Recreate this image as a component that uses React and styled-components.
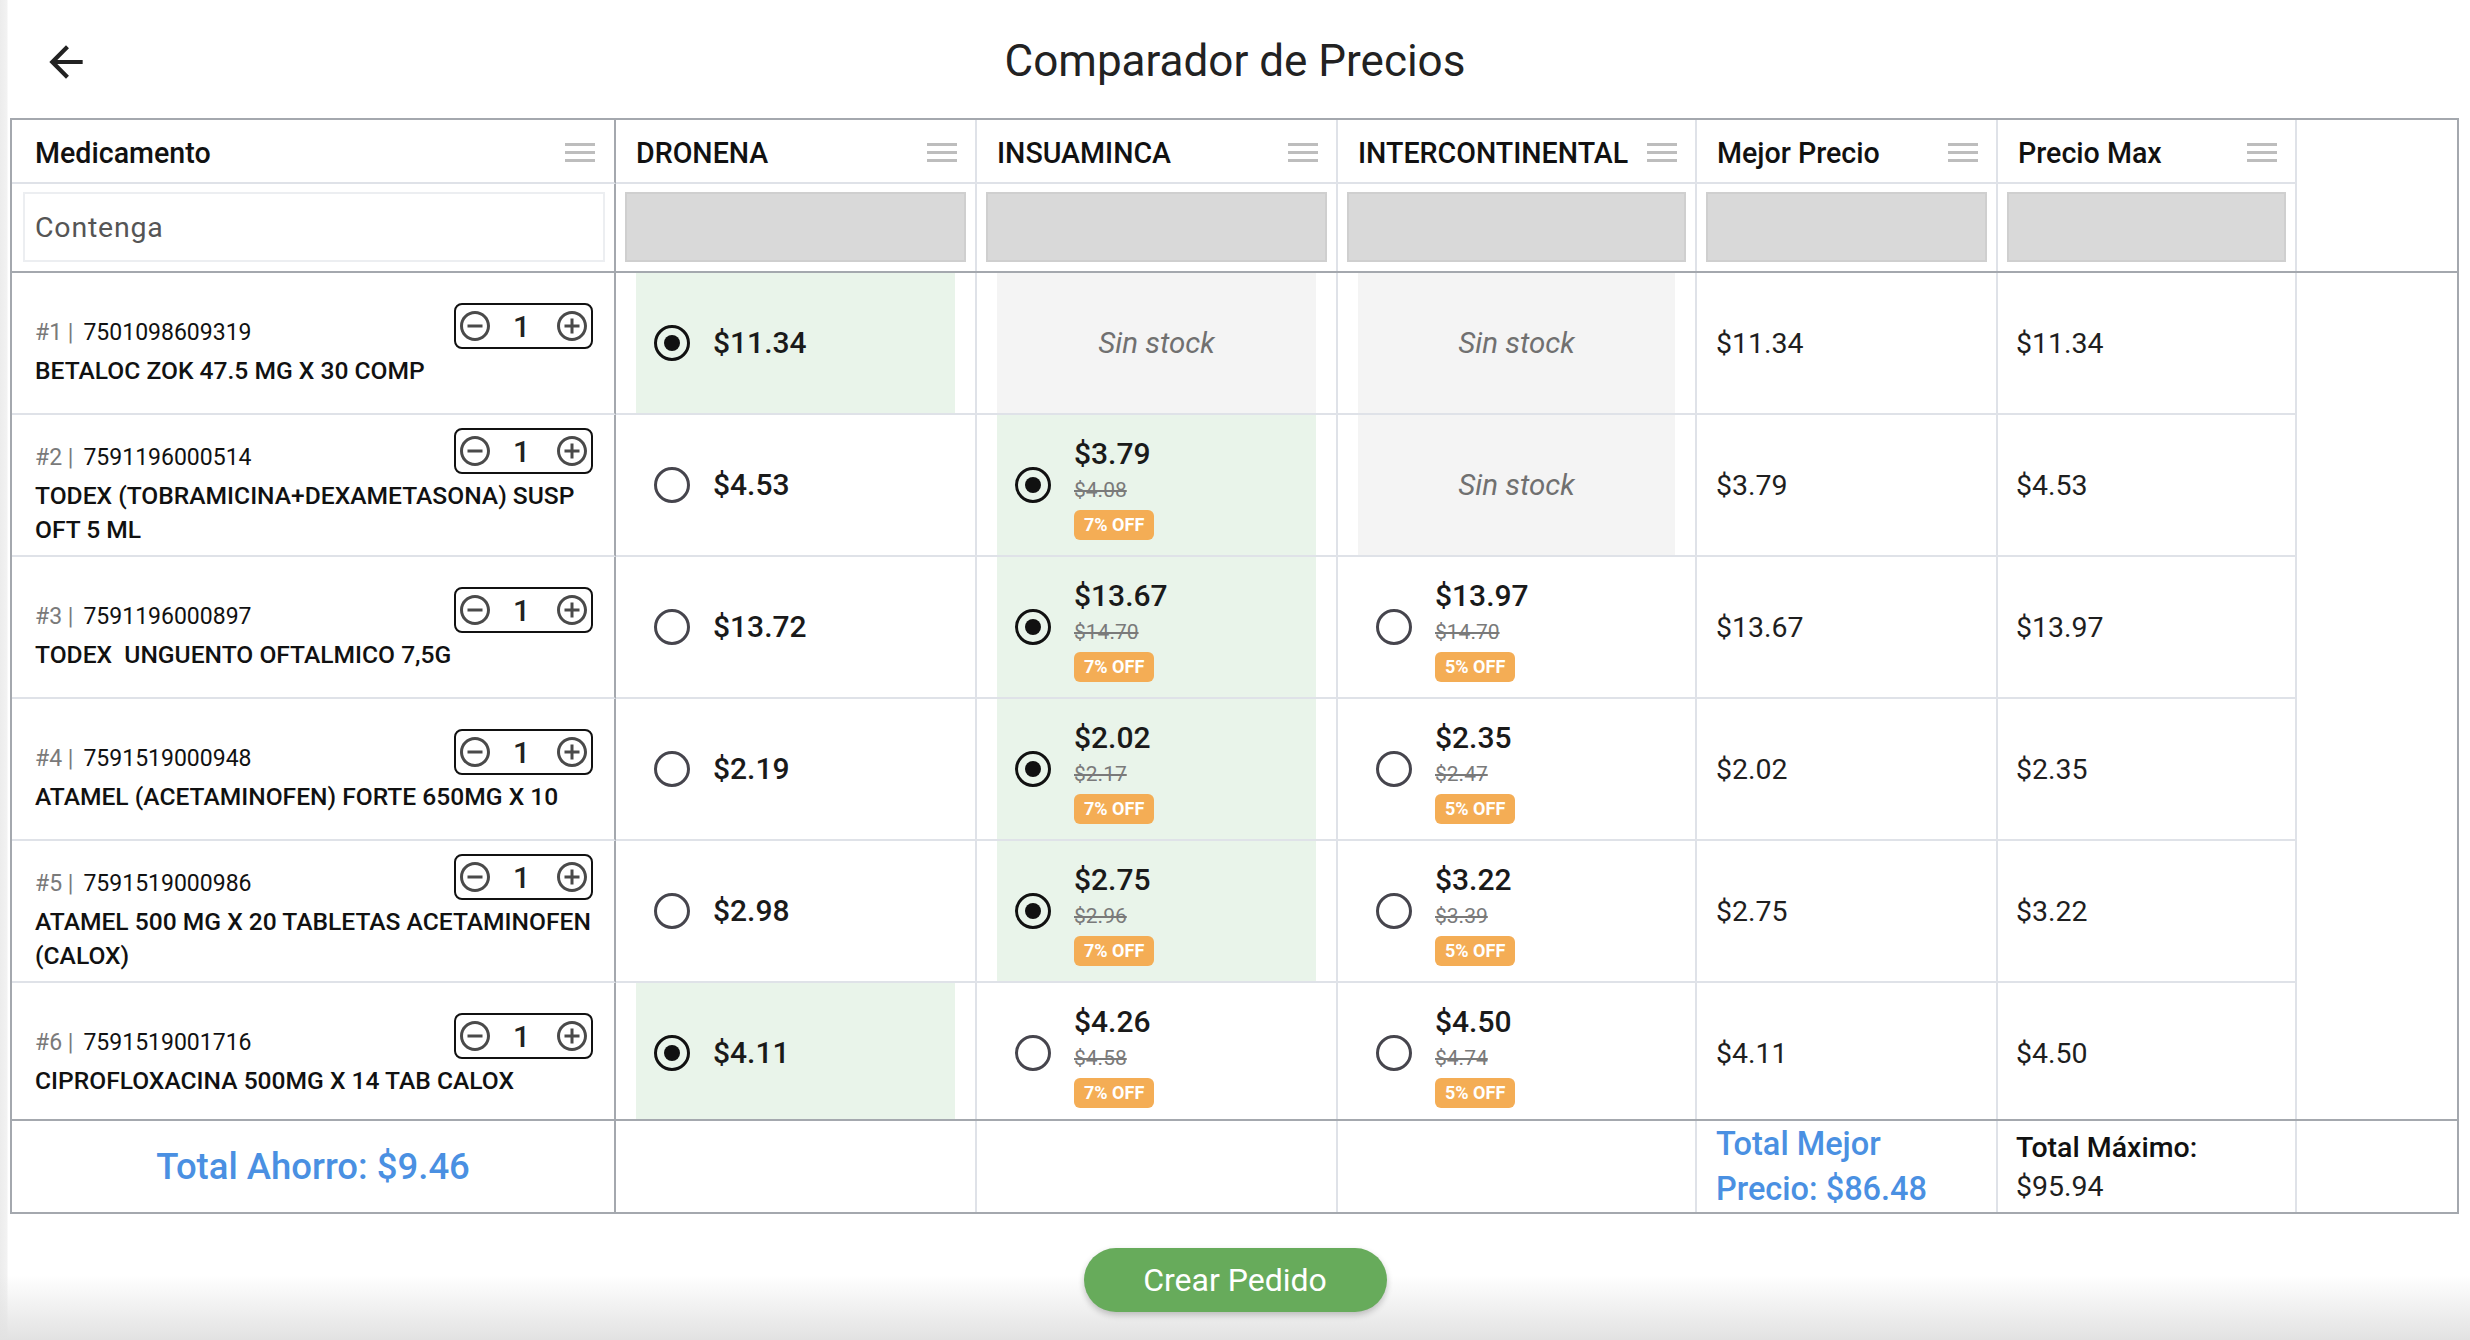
import React from 'react';
import styled, { createGlobalStyle, css } from 'styled-components';

const GlobalStyle = createGlobalStyle`
  html, body {
    margin: 0;
    padding: 0;
  }
  body {
    font-family: Roboto, "Liberation Sans", sans-serif;
    color: #1f1f1f;
  }
  * {
    box-sizing: border-box;
  }
`;

const LIGHT = '#dfe2e8';
const DARK = '#a4a8ae';
const COLUMNS = '604px 361px 361px 359px 301px 299px 1fr';

const Page = styled.div`
  width: 2470px;
  height: 1340px;
  overflow: hidden;
  display: flex;
  flex-direction: column;
  background:
    linear-gradient(to bottom, rgba(255, 255, 255, 0) 1275px, rgba(226, 226, 226, 1) 1340px),
    linear-gradient(to right, #ececec 0, #f2f2f2 7px, #ffffff 8px);
`;

const TopBar = styled.header`
  height: 118px;
  flex: none;
  display: grid;
  grid-template-columns: 1fr auto 1fr;
  align-items: center;
  padding: 0 41px;
`;

const BackButton = styled.button`
  justify-self: start;
  width: 50px;
  height: 50px;
  margin-top: 6px;
  padding: 0;
  border: none;
  background: transparent;
  display: flex;
  align-items: center;
  justify-content: center;
`;

const Title = styled.h1`
  margin: 3px 0 0;
  font-size: 44px;
  font-weight: 400;
  color: #222;
`;

const Table = styled.div`
  flex: none;
  margin: 0 11px 0 10px;
  border: 2px solid ${DARK};
  background: #fff;
`;

const GridRow = styled.div`
  display: grid;
  grid-template-columns: ${COLUMNS};
  ${(p) => p.$bottom && css`border-bottom: 2px solid ${DARK};`}
  ${(p) => p.$top && css`border-top: 2px solid ${DARK};`}
`;

const edge = css`
  border-right: 2px solid ${(p) => (p.$first ? DARK : LIGHT)};
  ${(p) => p.$blank && css`border-right: none;`}
`;

const HeaderCell = styled.div`
  ${edge}
  height: 64px;
  border-bottom: ${(p) => (p.$blank ? 'none' : `2px solid ${LIGHT}`)};
  display: flex;
  align-items: center;
  justify-content: space-between;
  padding: ${(p) => (p.$first ? '4px 19px 0 23px' : '4px 18px 0 20px')};
  font-size: 28.6px;
  font-weight: 500;
  color: #111;
`;

const FilterCell = styled.div`
  ${edge}
  height: 87px;
  padding: ${(p) => (p.$first ? '8px 9px 9px 11px' : '8px 9px 9px 9px')};
`;

const FilterInput = styled.div`
  height: 100%;
  border: 2px solid #eceef1;
  display: flex;
  align-items: center;
  padding-left: 10px;
  font-size: 28.5px;
  letter-spacing: 0.8px;
  color: #555;
`;

const FilterBox = styled.div`
  height: 100%;
  background: #d9d9d9;
  border: 2px solid #cfcfcf;
`;

const Body = styled.div`
  height: 846px;
  overflow: hidden;
`;

const Cell = styled.div`
  ${edge}
  height: 142px;
  border-bottom: ${(p) => (p.$blank ? 'none' : `2px solid ${LIGHT}`)};
`;

const MedCell = styled(Cell)`
  padding: 5px 21px 0 23px;
  display: flex;
  flex-direction: column;
  justify-content: center;
`;

const MedTop = styled.div`
  display: flex;
  justify-content: space-between;
  align-items: flex-end;
`;

const MedLabel = styled.div`
  font-size: 23px;
  line-height: 33px;
  color: #111;
`;

const MedIndex = styled.span`
  color: #7a7a7a;
  margin-right: 10px;
`;

const MedName = styled.div`
  margin-top: 5px;
  margin-right: -12px;
  font-size: 24.6px;
  line-height: 34px;
  font-weight: 500;
  color: #111;
`;

const Stepper = styled.div`
  width: 139px;
  height: 46px;
  border: 2px solid #111;
  border-radius: 8px;
  display: flex;
  align-items: center;
  justify-content: space-between;
  padding: 0 1px;
  font-size: 30px;
  font-weight: 500;
  color: #222;

  span {
    margin-left: -4px;
  }
`;

const SupplierCell = styled(Cell)`
  padding: 0 20px;
`;

const Offer = styled.div`
  height: 100%;
  display: flex;
  align-items: center;
  gap: 23px;
  padding-left: 18px;
  background: ${(p) => (p.$selected ? '#e9f4ea' : 'transparent')};
`;

const NoStock = styled.div`
  height: 100%;
  display: flex;
  align-items: center;
  justify-content: center;
  background: #f4f4f4;
  font-size: 29.5px;
  font-style: italic;
  color: #707070;
`;

const Radio = styled.span`
  flex: none;
  width: 36px;
  height: 36px;
  border-radius: 50%;
  border: 3.4px solid ${(p) => (p.$checked ? '#111' : '#46454d')};
  display: flex;
  align-items: center;
  justify-content: center;

  &::after {
    content: '';
    display: ${(p) => (p.$checked ? 'block' : 'none')};
    width: 16px;
    height: 16px;
    border-radius: 50%;
    background: #111;
  }
`;

const PriceStack = styled.div`
  display: flex;
  flex-direction: column;
  align-items: flex-start;
  padding-top: 4px;
`;

const Price = styled.div`
  font-size: 30px;
  line-height: 38px;
  font-weight: 500;
  color: #1a1a1a;
`;

const OldPrice = styled.div`
  margin-top: 3px;
  font-size: 21px;
  line-height: 28px;
  color: #7a7a7a;
  text-decoration: line-through;
`;

const Badge = styled.span`
  margin-top: 6px;
  height: 30px;
  padding: 0 10px;
  border-radius: 6px;
  background: #f4ad55;
  color: #fff;
  font-size: 18px;
  font-weight: 700;
  display: flex;
  align-items: center;
`;

const ValueCell = styled(Cell)`
  display: flex;
  align-items: center;
  padding-left: ${(p) => (p.$max ? '18px' : '19px')};
  font-size: 28.5px;
  color: #1f1f1f;
`;

const FootCell = styled.div`
  ${edge}
  height: 91px;
  display: flex;
  flex-direction: column;
  justify-content: center;
  padding-left: ${(p) => (p.$max ? '18px' : '19px')};
`;

const SavingsCell = styled(FootCell)`
  align-items: center;
  padding-left: 0;
`;

const BlueTotal = styled.div`
  font-size: ${(p) => (p.$big ? '36.5px' : '32.5px')};
  line-height: ${(p) => (p.$big ? '44px' : '45px')};
  font-weight: 500;
  color: #4a90e2;
  padding-right: ${(p) => (p.$big ? '0' : '12px')};
`;

const MaxLabel = styled.div`
  font-size: 28.5px;
  line-height: 39px;
  font-weight: 500;
  color: #111;
`;

const MaxValue = styled.div`
  font-size: 28.5px;
  line-height: 39px;
  color: #1f1f1f;
`;

const ActionBar = styled.div`
  flex: none;
  display: flex;
  justify-content: center;
  padding-top: 34px;
`;

const CreateButton = styled.button`
  width: 303px;
  height: 64px;
  border: none;
  border-radius: 32px;
  background: #67ab5b;
  color: #fff;
  font-family: Roboto, "Liberation Sans", sans-serif;
  font-size: 32px;
  font-weight: 400;
  box-shadow: 0 3px 6px rgba(0, 0, 0, 0.22);
`;

const ArrowBack = () => (
  <svg width="50" height="50" viewBox="0 0 24 24">
    <path fill="#222" d="M20 11H7.83l5.59-5.59L12 4l-8 8 8 8 1.41-1.41L7.83 13H20v-2z" />
  </svg>
);

const MenuIcon = () => (
  <svg width="30" height="20" viewBox="0 0 30 20">
    <rect x="0" y="0" width="30" height="3" fill="#bdbdbd" />
    <rect x="0" y="8" width="30" height="3" fill="#bdbdbd" />
    <rect x="0" y="16" width="30" height="3" fill="#bdbdbd" />
  </svg>
);

const MinusCircle = () => (
  <svg width="36" height="36" viewBox="0 0 24 24">
    <path
      fill="#4a4a4a"
      d="M7 11v2h10v-2H7zm5-9C6.48 2 2 6.48 2 12s4.48 10 10 10 10-4.48 10-10S17.52 2 12 2zm0 18c-4.41 0-8-3.590-8-8s3.59-8 8-8 8 3.59 8 8-3.59 8-8 8z"
    />
  </svg>
);

const PlusCircle = () => (
  <svg width="36" height="36" viewBox="0 0 24 24">
    <path
      fill="#4a4a4a"
      d="M13 7h-2v4H7v2h4v4h2v-4h4v-2h-4V7zm-1-5C6.48 2 2 6.48 2 12s4.48 10 10 10 10-4.48 10-10S17.52 2 12 2zm0 18c-4.41 0-8-3.59-8-8s3.59-8 8-8 8 3.59 8 8-3.59 8-8 8z"
    />
  </svg>
);

const headers = ['Medicamento', 'DRONENA', 'INSUAMINCA', 'INTERCONTINENTAL', 'Mejor Precio', 'Precio Max'];

const rows = [
  {
    code: '7501098609319',
    name: 'BETALOC ZOK 47.5 MG X 30 COMP',
    offers: [{ price: '$11.34', selected: true }, null, null],
    best: '$11.34',
    max: '$11.34',
  },
  {
    code: '7591196000514',
    name: 'TODEX (TOBRAMICINA+DEXAMETASONA) SUSP OFT 5 ML',
    offers: [{ price: '$4.53' }, { price: '$3.79', old: '$4.08', off: '7% OFF', selected: true }, null],
    best: '$3.79',
    max: '$4.53',
  },
  {
    code: '7591196000897',
    name: 'TODEX\u00a0 UNGUENTO OFTALMICO 7,5G',
    offers: [
      { price: '$13.72' },
      { price: '$13.67', old: '$14.70', off: '7% OFF', selected: true },
      { price: '$13.97', old: '$14.70', off: '5% OFF' },
    ],
    best: '$13.67',
    max: '$13.97',
  },
  {
    code: '7591519000948',
    name: 'ATAMEL (ACETAMINOFEN) FORTE 650MG X 10',
    offers: [
      { price: '$2.19' },
      { price: '$2.02', old: '$2.17', off: '7% OFF', selected: true },
      { price: '$2.35', old: '$2.47', off: '5% OFF' },
    ],
    best: '$2.02',
    max: '$2.35',
  },
  {
    code: '7591519000986',
    name: 'ATAMEL 500 MG X 20 TABLETAS ACETAMINOFEN (CALOX)',
    offers: [
      { price: '$2.98' },
      { price: '$2.75', old: '$2.96', off: '7% OFF', selected: true },
      { price: '$3.22', old: '$3.39', off: '5% OFF' },
    ],
    best: '$2.75',
    max: '$3.22',
  },
  {
    code: '7591519001716',
    name: 'CIPROFLOXACINA 500MG X 14 TAB CALOX',
    offers: [
      { price: '$4.11', selected: true },
      { price: '$4.26', old: '$4.58', off: '7% OFF' },
      { price: '$4.50', old: '$4.74', off: '5% OFF' },
    ],
    best: '$4.11',
    max: '$4.50',
  },
];

const OfferCell = ({ offer }) => (
  <SupplierCell>
    {offer ? (
      <Offer $selected={offer.selected}>
        <Radio $checked={offer.selected} />
        {offer.old ? (
          <PriceStack>
            <Price>{offer.price}</Price>
            <OldPrice>{offer.old}</OldPrice>
            <Badge>{offer.off}</Badge>
          </PriceStack>
        ) : (
          <Price>{offer.price}</Price>
        )}
      </Offer>
    ) : (
      <NoStock>Sin stock</NoStock>
    )}
  </SupplierCell>
);

const App = () => {
  return (
    <Page>
      <GlobalStyle />
      <TopBar>
        <BackButton aria-label="Volver">
          <ArrowBack />
        </BackButton>
        <Title>Comparador de Precios</Title>
        <span />
      </TopBar>

      <Table>
        <GridRow>
          {headers.map((h, i) => (
            <HeaderCell key={h} $first={i === 0}>
              <span>{h}</span>
              <MenuIcon />
            </HeaderCell>
          ))}
          <HeaderCell $blank />
        </GridRow>

        <GridRow $bottom>
          <FilterCell $first>
            <FilterInput>Contenga</FilterInput>
          </FilterCell>
          {headers.slice(1).map((h) => (
            <FilterCell key={h}>
              <FilterBox />
            </FilterCell>
          ))}
          <FilterCell $blank />
        </GridRow>

        <Body>
          {rows.map((row, i) => (
            <GridRow key={row.code}>
              <MedCell $first>
                <MedTop>
                  <MedLabel>
                    <MedIndex>#{i + 1} |</MedIndex>
                    {row.code}
                  </MedLabel>
                  <Stepper>
                    <MinusCircle />
                    <span>1</span>
                    <PlusCircle />
                  </Stepper>
                </MedTop>
                <MedName>{row.name}</MedName>
              </MedCell>
              {row.offers.map((offer, j) => (
                <OfferCell key={j} offer={offer} />
              ))}
              <ValueCell>{row.best}</ValueCell>
              <ValueCell $max>{row.max}</ValueCell>
              <Cell $blank />
            </GridRow>
          ))}
        </Body>

        <GridRow $top>
          <SavingsCell $first>
            <BlueTotal $big>Total Ahorro: $9.46</BlueTotal>
          </SavingsCell>
          <FootCell />
          <FootCell />
          <FootCell />
          <FootCell>
            <BlueTotal>Total Mejor Precio: $86.48</BlueTotal>
          </FootCell>
          <FootCell $max>
            <MaxLabel>Total Máximo:</MaxLabel>
            <MaxValue>$95.94</MaxValue>
          </FootCell>
          <FootCell $blank />
        </GridRow>
      </Table>

      <ActionBar>
        <CreateButton>Crear Pedido</CreateButton>
      </ActionBar>
    </Page>
  );
};

export default App;
